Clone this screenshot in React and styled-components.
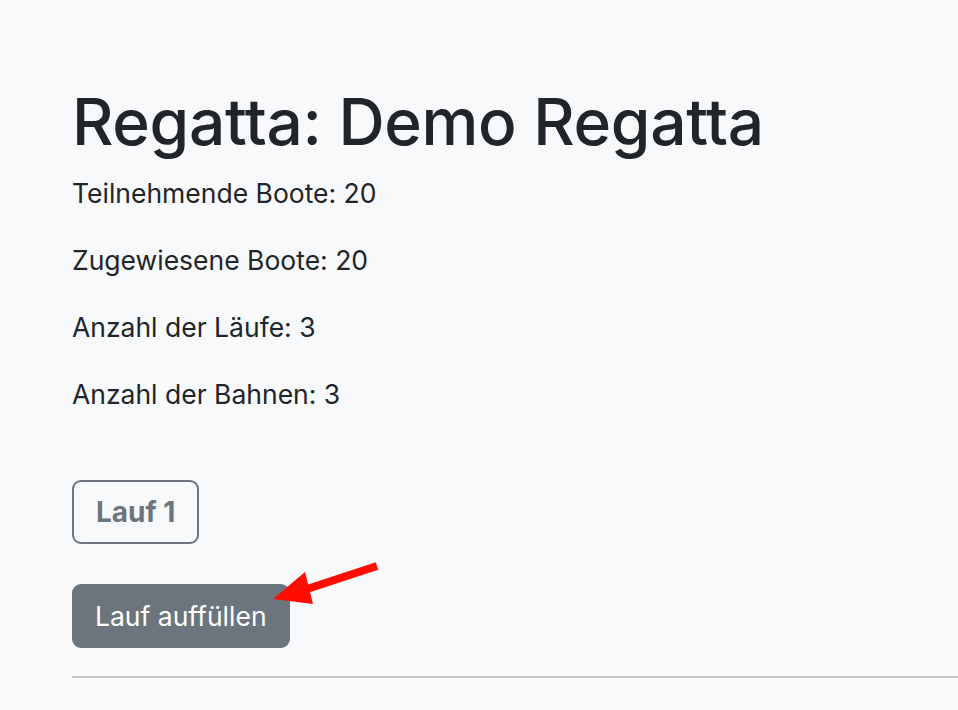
import React from "react";
import styled, { createGlobalStyle } from "styled-components";

const Global = createGlobalStyle`
  html, body { margin: 0; padding: 0; background: #f8f9fa; }
  body { font-family: Inter, "Noto Sans", sans-serif; color: #212529; }
`;

const Page = styled.div`
  position: relative;
  width: 958px;
  height: 710px;
  overflow: hidden;
  box-sizing: border-box;
  padding: 84px 0 0 72px;
`;

const Title = styled.h1`
  margin: 0 0 13px 0;
  font-size: 64px;
  font-weight: 500;
  line-height: 76px;
  letter-spacing: -0.3px;
`;

const Info = styled.p`
  margin: 0 0 27px 0;
  font-size: 26.5px;
  line-height: 40px;
`;

const Actions = styled.div`
  display: flex;
  flex-direction: column;
  align-items: flex-start;
  gap: 40px;
  margin-top: 66px;
`;

const Button = styled.button`
  box-sizing: border-box;
  height: 64px;
  padding: 0 ${(p) => (p.$outline ? "22px" : "21px")};
  border-radius: 9px;
  font-family: Inter, "Noto Sans", sans-serif;
  font-size: ${(p) => (p.$outline ? "28px" : "26.5px")};
  cursor: pointer;
  border: 2px solid #6c757d;
  background: ${(p) => (p.$outline ? "transparent" : "#6c757d")};
  color: ${(p) => (p.$outline ? "#6c757d" : "#ffffff")};
  font-weight: ${(p) => (p.$outline ? 700 : 400)};
`;

const Rule = styled.hr`
  margin: 28px 0 0 0;
  border: 0;
  border-top: 2px solid #c6c7c9;
`;

const Arrow = styled.svg`
  position: absolute;
  left: 268px;
  top: 556px;
`;

export default function App() {
  return (
    <>
      <Global />
      <Page>
        <Title>Regatta: Demo Regatta</Title>
        <Info>Teilnehmende Boote: 20</Info>
        <Info>Zugewiesene Boote: 20</Info>
        <Info>Anzahl der Läufe: 3</Info>
        <Info>Anzahl der Bahnen: 3</Info>
        <Actions>
          <Button $outline>Lauf 1</Button>
          <Button>Lauf auffüllen</Button>
        </Actions>
        <Rule />
        <Arrow width="120" height="56" viewBox="0 0 120 56">
          <line x1="109" y1="10" x2="36" y2="34" stroke="#ff0d00" strokeWidth="8" strokeLinecap="butt" />
          <polygon points="5,43 37,16 45,48" fill="#ff0d00" />
        </Arrow>
      </Page>
    </>
  );
}
